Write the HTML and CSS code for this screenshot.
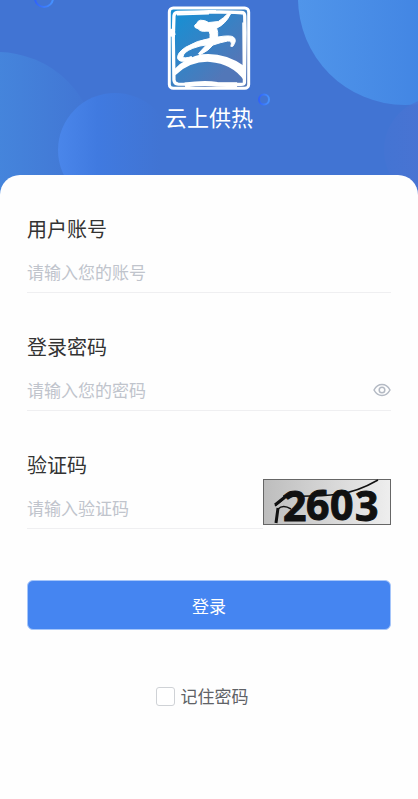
FILE: index.html
```html
<!DOCTYPE html>
<html lang="zh-CN">
<head>
  <meta charset="UTF-8" />
  <meta name="viewport" content="width=device-width, initial-scale=1.0"/>
  <title>云上供热</title>
  <link rel="stylesheet" href="styles.css">
</head>
<body>

  <header class="banner">
    <svg class="banner-bg" viewBox="0 0 418 196" preserveAspectRatio="xMidYMin slice" aria-hidden="true">
      <defs>
        <linearGradient id="gLeft"><stop offset="0.5" stop-color="#4585dc"/><stop offset="1" stop-color="#4174d3"/></linearGradient>
        <linearGradient id="gMid"><stop offset="0" stop-color="#4a86ea"/><stop offset="0.35" stop-color="#407ae0"/><stop offset="0.9" stop-color="#4174d3"/></linearGradient>
        <linearGradient id="gRight"><stop offset="0" stop-color="#5095ea"/><stop offset="0.6" stop-color="#4285e3"/></linearGradient>
        <linearGradient id="gPurple"><stop offset="0" stop-color="#4a74d3" stop-opacity="0.3"/><stop offset="0.5" stop-color="#4b73d2"/></linearGradient>
        <linearGradient id="gRing"><stop offset="0" stop-color="#2f62fa"/><stop offset="1" stop-color="#4692ff"/></linearGradient>
      </defs>
      <rect width="418" height="196" fill="#4174d3"/>
      <circle cx="-3" cy="152" r="100" fill="url(#gLeft)"/>
      <circle cx="115" cy="150" r="57" fill="url(#gMid)"/>
      <circle cx="405" cy="-2" r="107" fill="url(#gRight)"/>
      <circle cx="436" cy="150" r="52" fill="url(#gPurple)"/>
      <circle cx="44" cy="-2" r="9" fill="none" stroke="url(#gRing)" stroke-width="2"/>
      <circle cx="264" cy="99.500" r="5" fill="#4174d3" stroke="url(#gRing)" stroke-width="2"/>
    </svg>
    <svg class="logo" viewBox="0 0 250 254" role="img" aria-label="云上供热">
      <defs>
        <linearGradient id="gLogo" x1="0" y1="0" x2="1" y2="1"><stop offset="0.1" stop-color="#188fd3"/><stop offset="0.75" stop-color="#5277b8"/></linearGradient>
      </defs>
      <rect x="5" y="6" width="240" height="243" rx="12" fill="url(#gLogo)" stroke="#fff" stroke-width="9"/>
      <path d="M29 19 L146 17 M158 18 L222 19 Q233 19 233 30 L234 80 L232 232 Q231 237 222 237 L32 236 Q20 235 19 224 L17 98 L19 30 Q20 20 29 19Z" fill="none" stroke="#fff" stroke-width="10" stroke-linejoin="round"/>
      <path d="M52 239 Q110 231 150 237 L210 238" fill="none" stroke="#fff" stroke-width="15"/>
      <path d="M5 73 Q12 65 21 73 L24 87 Q15 96 4 91Z" fill="#fff"/>
      <path d="M28 26 L125 23" stroke="#fff" stroke-width="5"/>
      <path d="M149 18 L225 23 M228 50 L229 180" stroke="#fff" stroke-width="5"/>
      <path d="M183 22 Q169 37 153 47 L124 50 Q112 42 99 43 Q90 45 88 53 Q78 58 83 65 L92 69 Q100 79 116 76 L125 76 Q130 84 128 98 Q88 104 54 125 Q28 142 30 158 Q33 169 53 167 L74 157 L72 153 Q50 160 46 154 Q48 139 76 128 Q99 119 117 118 L93 144 L97 148 Q126 134 137 118 Q160 110 181 106 Q197 104 191 122 L197 122 Q211 103 199 94 Q189 87 151 94 Q153 79 148 67 Q176 54 190 24Z" fill="#fff" stroke="#fff" stroke-width="3" stroke-linejoin="round"/>
      <path d="M20 191 Q55 155 103 146 Q171 139 229 180 L231 225 Q195 174 128 169 Q71 166 27 206 L20 211Z" fill="#fff"/>
    </svg>
    <h1>云上供热</h1>
  </header>

  <main class="card">
    <form id="loginForm">
      <div class="field">
        <label for="account">用户账号</label>
        <input type="text" id="account" placeholder="请输入您的账号" />
      </div>

      <div class="field">
        <label for="password">登录密码</label>
        <div class="input-row">
          <input type="password" id="password" placeholder="请输入您的密码" />
          <button type="button" class="eye" id="togglePassword" aria-label="显示密码">
            <svg viewBox="0 0 18 14" aria-hidden="true">
              <path d="M1 7 Q4 1.500 9 1.500 T17 7 Q14 12.500 9 12.500 T1 7Z"/>
              <circle cx="9" cy="7" r="2.800"/>
            </svg>
          </button>
        </div>
      </div>

      <div class="code-row">
        <div class="field">
          <label for="code">验证码</label>
          <input type="text" id="code" placeholder="请输入验证码" />
        </div>
        <svg class="captcha" viewBox="0 0 128 46" role="img" aria-label="验证码图片">
          <defs>
            <linearGradient id="gCode"><stop offset="0" stop-color="#bdbdbd"/><stop offset="1" stop-color="#eee"/></linearGradient>
          </defs>
          <rect x="0.500" y="0.500" width="127" height="45" fill="url(#gCode)" stroke="#666"/>
          <path d="M12 27 L22 19 M20 17 Q55 18 76 15 Q94 13 115 1 M15 30 Q20 25 28 30" fill="none" stroke="#111" stroke-width="1.500"/>
          <path d="M13 44 L15 29 M12 26 L22 18 L32 16" fill="none" stroke="#111" stroke-width="3"/>
          <g class="captcha-text">
            <text x="20" y="42">2</text>
            <text x="43" y="41">6</text>
            <text x="67" y="41">0</text>
            <text x="92" y="42">3</text>
          </g>
        </svg>
      </div>

      <button type="submit" class="submit">登录</button>

      <label class="remember"><input type="checkbox" id="remember" />记住密码</label>
    </form>
  </main>

  <script>
    document.getElementById('togglePassword').addEventListener('click', function () {
      const password = document.getElementById('password');
      password.type = password.type === 'password' ? 'text' : 'password';
    });

    document.getElementById('loginForm').addEventListener('submit', function (e) {
      e.preventDefault();
    });
  </script>

</body>
</html>
```
FILE: styles.css
```css
* {
  box-sizing: border-box;
}

body {
  margin: 0;
  background: #fefefe;
  color: #333;
  font-family: "Noto Sans CJK SC", sans-serif;
  font-size: 17px;
}

/* banner */
.banner {
  position: relative;
  display: flex;
  flex-direction: column;
  align-items: center;
  padding: 6px 0 64px;
  background: #4174d3;
  overflow: hidden;
}

.banner-bg {
  position: absolute;
  top: 0;
  left: 0;
  width: 100%;
  height: 100%;
}

.logo {
  position: relative;
  width: 84px;
  height: 84px;
}

h1 {
  position: relative;
  margin: 11px 0 0;
  color: #fff;
  font-size: 22px;
  font-weight: 400;
  line-height: 30px;
}

/* form */
.card {
  position: relative;
  margin-top: -20px;
  padding: 40px 27px;
  border-radius: 20px 20px 0 0;
  background: #fefefe;
}

.field {
  margin-bottom: 40px;
}

.field label {
  display: block;
  margin-bottom: 8px;
  font-size: 20px;
  line-height: 28px;
}

.field input {
  display: block;
  width: 100%;
  height: 42px;
  padding: 0;
  border: none;
  border-bottom: 1px solid #efeff1;
  background: none;
  color: #333;
  font: inherit;
  outline: none;
}

.field input::placeholder {
  color: #c0c4cc;
  opacity: 1;
}

.input-row {
  display: flex;
  align-items: center;
  border-bottom: 1px solid #efeff1;
}

.input-row input {
  flex: 1;
  min-width: 0;
  height: 41px;
  border: none;
}

.eye {
  display: flex;
  padding: 0;
  border: none;
  background: none;
  cursor: pointer;
}

.eye svg {
  width: 18px;
  height: 14px;
  fill: none;
  stroke: #b4bac4;
  stroke-width: 1.5;
}

.code-row {
  display: flex;
  align-items: flex-end;
}

.code-row .field {
  flex: 1;
  min-width: 0;
  margin-bottom: 0;
}

.captcha {
  width: 128px;
  height: 46px;
  margin-bottom: 4px;
  overflow: visible;
}

.captcha-text {
  font-family: "Open Sans", sans-serif;
  font-size: 41px;
  font-weight: 700;
  fill: #111;
  stroke: #111;
  stroke-width: 1;
}

.submit {
  display: block;
  width: 100%;
  height: 50px;
  margin-top: 51px;
  border: 1px solid #a6c6fa;
  border-radius: 6px;
  background: #4585f1;
  color: #fff;
  font: inherit;
  cursor: pointer;
}

.remember {
  display: flex;
  align-items: center;
  justify-content: center;
  gap: 6px;
  margin-top: 54px;
  padding-right: 14px;
  color: #606266;
  line-height: 24px;
}

.remember input {
  appearance: none;
  width: 19px;
  height: 19px;
  margin: 0;
  border: 1px solid #cfd2d6;
  border-radius: 3px;
  background: #fff;
}

.remember input:checked {
  border-color: #4585f1;
  background: #4585f1;
}
```
